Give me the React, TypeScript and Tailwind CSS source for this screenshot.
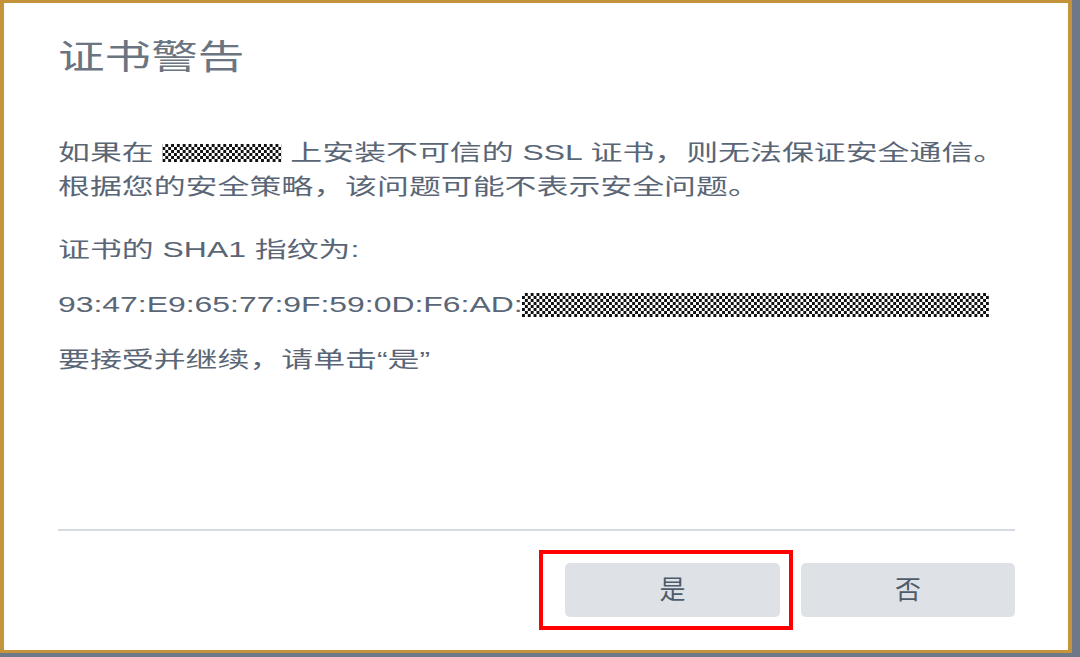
import React from "react";

const font = { fontFamily: '"Liberation Sans", "Noto Sans CJK SC", sans-serif' };

function Masked({ className }: { className: string }) {
  // redacted chunk, drawn as a black/white checker
  return (
    <span
      className={
        "inline-block align-middle bg-[repeating-conic-gradient(#111_0%_25%,#fff_0%_50%)] bg-[length:4px_6px] " +
        className
      }
    />
  );
}

export default function App() {
  return (
    <div className="w-[1080px] h-[657px] overflow-hidden bg-[#6d7987] flex items-start" style={font}>
      <div className="w-[1072px] h-[653px] overflow-hidden bg-white border-x-4 border-y-[3px] border-[#c4943c] flex flex-col pl-[54px] pr-[53px]">
        {/* Title */}
        <h1 className="mt-[34px] h-[40px] leading-[40px] text-[34px] text-[#6b7581] origin-left scale-x-[1.37] whitespace-nowrap">
          证书警告
        </h1>

        {/* Body */}
        <div className="mt-[59px] text-[22px] leading-[34px] text-[#5a6676]">
          <p className="origin-left scale-x-[1.45] whitespace-nowrap">
            如果在 <Masked className="w-[82px] h-[18px] -mt-[3px]" /> 上安装不可信的 SSL 证书，则无法保证安全通信。
          </p>
          <p className="origin-left scale-x-[1.45] whitespace-nowrap">
            根据您的安全策略，该问题可能不表示安全问题。
          </p>
          <p className="mt-[29px] origin-left scale-x-[1.45] whitespace-nowrap">证书的 SHA1 指纹为:</p>
          <p className="mt-[21px] origin-left scale-x-[1.45] whitespace-nowrap">
            93:47:E9:65:77:9F:59:0D:F6:AD:<Masked className="w-[322px] h-[24px] -mt-[3px]" />
          </p>
          <p className="mt-[21px] origin-left scale-x-[1.45] whitespace-nowrap">要接受并继续，请单击“是”</p>
        </div>

        <div className="flex-1" />

        {/* Footer */}
        <div className="h-[2px] bg-[#d4dae2]" />
        <div className="mt-[32px] mb-[33px] flex justify-end gap-[21px]">
          <div className="relative">
            <button className="w-[215px] h-[54px] rounded-[5px] bg-[#dee2e7] text-[26px] text-[#4f5b6a]">
              是
            </button>
            <div className="absolute -left-[26px] -top-[13px] w-[254px] h-[80px] border-4 border-[#ff0000] pointer-events-none" />
          </div>
          <button className="w-[214px] h-[54px] rounded-[5px] bg-[#dee2e7] text-[26px] text-[#4f5b6a]">
            否
          </button>
        </div>
      </div>
    </div>
  );
}
